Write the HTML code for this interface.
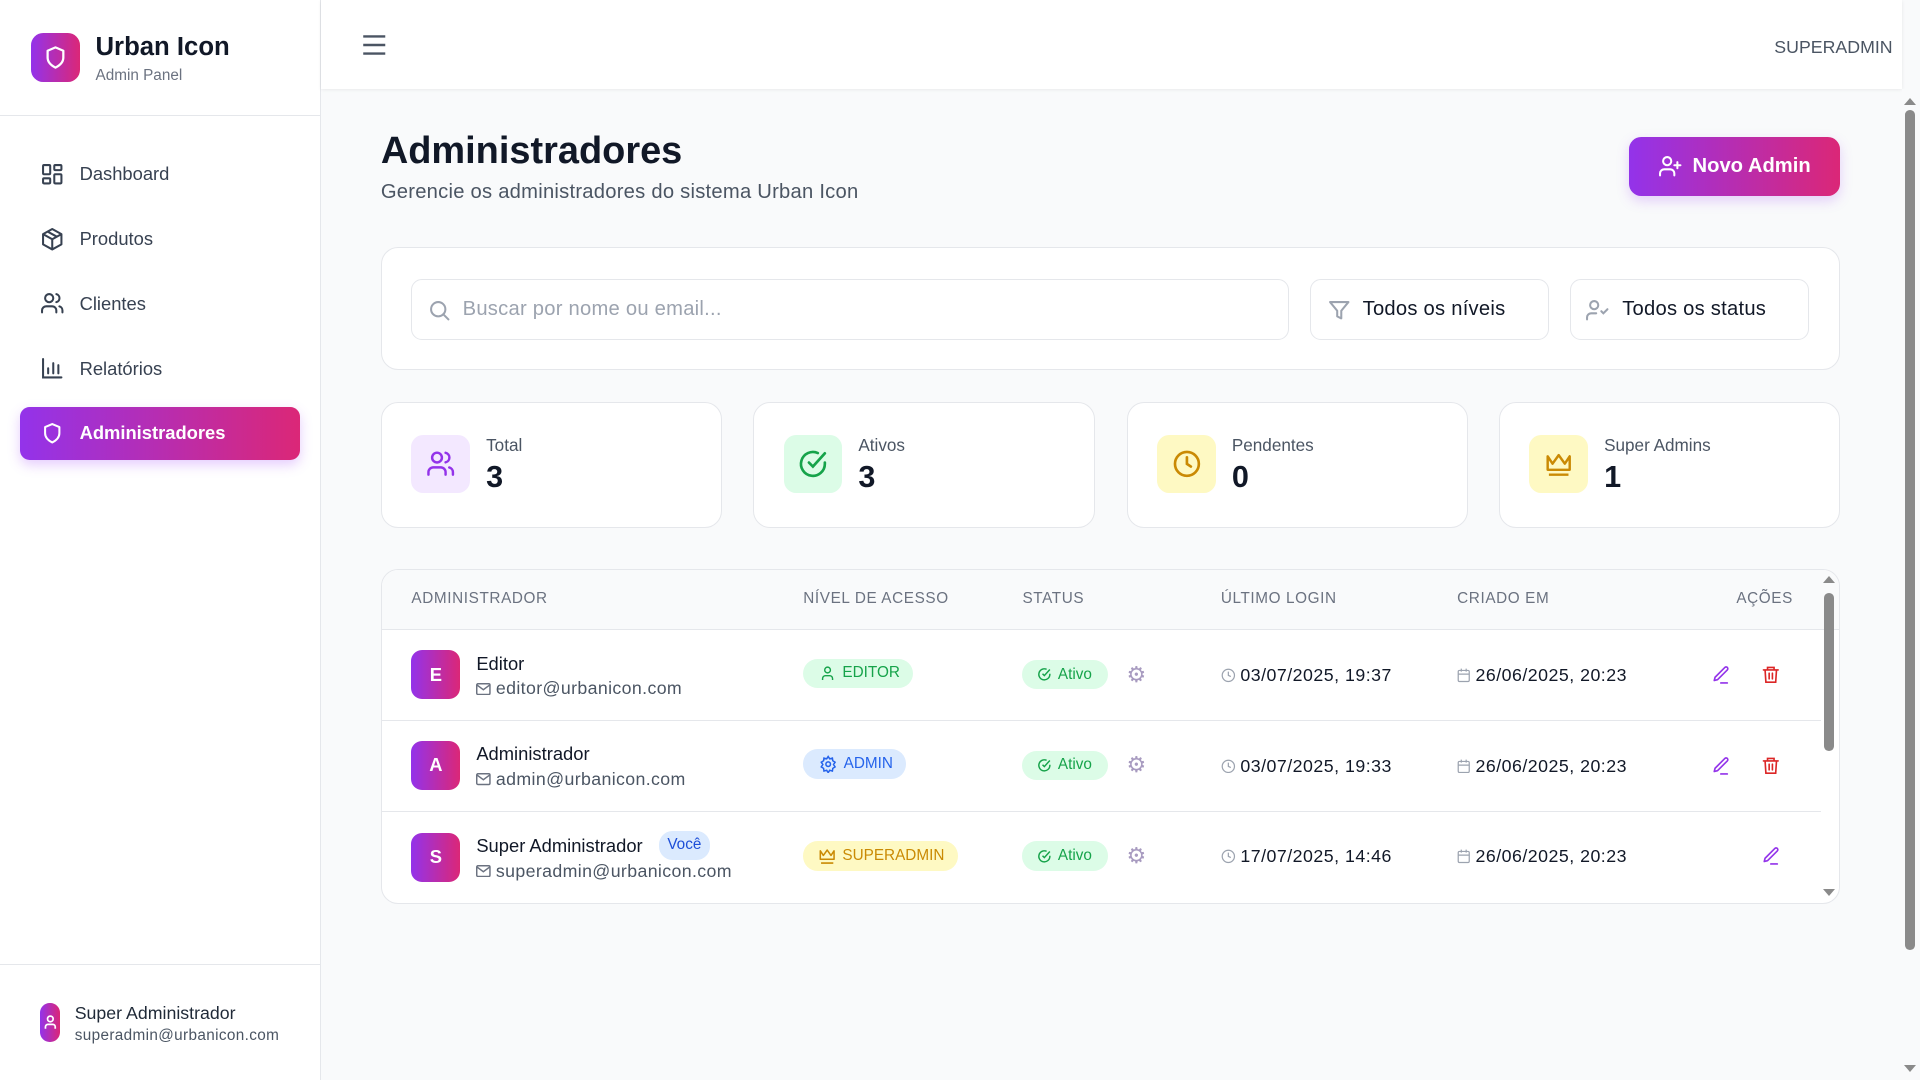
<!DOCTYPE html>
<html><head><meta charset="utf-8"><style>
html{zoom:1.22449}
*{box-sizing:border-box;margin:0;padding:0}
body{width:1568px;height:882px;overflow:hidden;background:#f9fafb;font-family:"Liberation Sans",sans-serif;color:#111827;position:relative}
.a{position:absolute}
svg{display:block}
.sb{left:0;top:0;width:262px;height:882px;background:#fff;border-right:1px solid #e5e7eb}
.nav{left:16px;width:229px;height:44px;border-radius:8px;display:flex;align-items:center;padding-left:17px;font-size:15px;color:#374151}
.nav svg{margin-right:12px}
.card{background:#fff;border:1px solid #e5e7eb;border-radius:14px}
.inp{border:1px solid #e5e7eb;border-radius:9px;height:50px;display:flex;align-items:center;font-size:16.5px;letter-spacing:.2px}
.ic{width:48px;height:48px;border-radius:10px;display:flex;align-items:center;justify-content:center}
.lbl{font-size:14px;color:#4b5563}
.num{font-size:25px;font-weight:bold;color:#111827}
.th{font-size:12.5px;color:#6b7280;letter-spacing:.5px;top:482px}
.av{width:40px;height:40px;border-radius:9px;background:linear-gradient(90deg,#9333ea,#db2777);color:#fff;font-weight:bold;font-size:15px;display:flex;align-items:center;justify-content:center}
.nm{font-size:15px;color:#111827}
.em{font-size:14.5px;color:#4b5563;display:flex;align-items:center;gap:4px;letter-spacing:.3px}
.bd{height:24px;border-radius:12px;display:flex;align-items:center;padding:0 11px 0 13px;font-size:12.5px;gap:5px}
.ok{background:#dcfce7;color:#16a34a;width:70px;padding-left:12px}
.dt{font-size:14.5px;display:flex;align-items:center;gap:4px;color:#111827;letter-spacing:.4px}
.row{left:311px;width:1176px;height:1px;background:#e5e7eb}
</style></head><body>
<div class="a sb">
 <div class="a" style="left:25px;top:27px;width:40px;height:40px;border-radius:10px;background:linear-gradient(90deg,#9333ea,#db2777);display:flex;align-items:center;justify-content:center">
  <svg width="22" height="22" viewBox="0 0 24 24" fill="none" stroke="#fff" stroke-width="2" stroke-linejoin="round"><path d="M12 3l7 3v6c0 4-3 7-7 9-4-2-7-5-7-9V6z"/></svg></div>
 <div class="a" style="left:78px;top:27px;font-size:21px;font-weight:bold">Urban Icon</div>
 <div class="a" style="left:78px;top:55px;font-size:12.5px;color:#6b7280">Admin Panel</div>
 <div class="a" style="left:0;top:94px;width:261px;height:1px;background:#e5e7eb"></div>
 <div class="a nav" style="top:120px"><svg width="20" height="20" viewBox="0 0 24 24" fill="none" stroke="#374151" stroke-width="2"><rect x="3" y="3" width="7" height="9" rx="1"/><rect x="14" y="3" width="7" height="5" rx="1"/><rect x="14" y="12" width="7" height="9" rx="1"/><rect x="3" y="16" width="7" height="5" rx="1"/></svg>Dashboard</div>
 <div class="a nav" style="top:173px"><svg width="20" height="20" viewBox="0 0 24 24" fill="none" stroke="#374151" stroke-width="2" stroke-linejoin="round"><path d="M12 2l9 5v10l-9 5-9-5V7z M3 7l9 5 9-5 M12 12v10 M7.5 4.5l9 5"/></svg>Produtos</div>
 <div class="a nav" style="top:226px"><svg width="20" height="20" viewBox="0 0 24 24" fill="none" stroke="#374151" stroke-width="2" stroke-linecap="round"><circle cx="9" cy="7" r="4"/><path d="M2 21v-2a4 4 0 014-4h6a4 4 0 014 4v2M16 3.1a4 4 0 010 7.8M22 21v-2a4 4 0 00-3-3.9"/></svg>Clientes</div>
 <div class="a nav" style="top:279px"><svg width="20" height="20" viewBox="0 0 24 24" fill="none" stroke="#374151" stroke-width="2" stroke-linecap="round"><path d="M3 3v18h18M8 17v-5M13 17V7M18 17v-8"/></svg>Relatórios</div>
 <div class="a nav" style="top:332px;background:linear-gradient(90deg,#9333ea,#db2777);color:#fff;font-weight:bold;box-shadow:0 4px 10px rgba(168,85,247,.3)"><svg width="20" height="20" viewBox="0 0 24 24" fill="none" stroke="#fff" stroke-width="2" stroke-linejoin="round"><path d="M12 3l7 3v6c0 4-3 7-7 9-4-2-7-5-7-9V6z"/></svg>Administradores</div>
 <div class="a" style="left:0;top:787px;width:261px;height:1px;background:#e5e7eb"></div>
 <div class="a" style="left:33px;top:819px;width:16px;height:32px;border-radius:8px;background:linear-gradient(90deg,#9333ea,#db2777);display:flex;align-items:center;justify-content:center"><svg width="12" height="14" viewBox="0 0 12 14" fill="none" stroke="#fff" stroke-width="1.4"><circle cx="6" cy="4" r="2.3"/><path d="M2 12v-1.5a2 2 0 012-2h4a2 2 0 012 2V12"/></svg></div>
 <div class="a" style="left:61px;top:819px;font-size:14.5px;color:#1f2937">Super Administrador</div>
 <div class="a" style="left:61px;top:839px;font-size:12.5px;color:#4b5563;letter-spacing:.3px">superadmin@urbanicon.com</div>
</div>
<div class="a" style="left:262px;top:0;width:1291px;height:73px;background:#fff;box-shadow:0 1px 3px rgba(0,0,0,.08)">
 <svg class="a" style="left:34px;top:28px" width="20" height="18" viewBox="0 0 20 18" stroke="#4b5563" stroke-width="2"><path d="M1 2h18M1 9h18M1 16h18"/></svg>
 <div class="a" style="left:1187px;top:30px;font-size:14.5px;color:#4b5563">SUPERADMIN</div>
</div>
<div class="a" style="left:1553px;top:73px;width:15px;height:809px;background:#f9fafb"></div>
<div class="a" style="left:1556px;top:90px;width:8px;height:686px;border-radius:4px;background:#8a8a8a"></div>
<div class="a" style="left:1555px;top:80px;width:0;height:0;border-left:5px solid transparent;border-right:5px solid transparent;border-bottom:6px solid #8a8a8a"></div>
<div class="a" style="left:1555px;top:870px;width:0;height:0;border-left:5px solid transparent;border-right:5px solid transparent;border-top:6px solid #8a8a8a"></div>
<div class="a" style="left:311px;top:106px;font-size:31px;font-weight:bold">Administradores</div>
<div class="a" style="left:311px;top:148px;font-size:16.5px;color:#4b5563;letter-spacing:.2px">Gerencie os administradores do sistema Urban Icon</div>
<div class="a" style="left:1330px;top:112px;width:173px;height:48px;border-radius:10px;background:linear-gradient(90deg,#9333ea,#db2777);color:#fff;font-size:16.5px;font-weight:bold;display:flex;align-items:center;justify-content:center;gap:8px;box-shadow:0 4px 10px rgba(168,85,247,.25)"><svg width="20" height="20" viewBox="0 0 24 24" fill="none" stroke="#fff" stroke-width="2" stroke-linecap="round"><circle cx="9" cy="7" r="4"/><path d="M2 21v-2a4 4 0 014-4h6a4 4 0 014 4v2M19 8v6M16 11h6"/></svg>Novo Admin</div>
<div class="a card" style="left:311px;top:202px;width:1192px;height:100px"></div>
<div class="a inp" style="left:336px;top:228px;width:717px;padding-left:12px;color:#9ca3af"><svg width="20" height="20" viewBox="0 0 24 24" fill="none" stroke="#9ca3af" stroke-width="2" stroke-linecap="round"><circle cx="11" cy="11" r="7"/><path d="M21 21l-5-5"/></svg><span style="margin-left:9px">Buscar por nome ou email...</span></div>
<div class="a inp" style="left:1070px;top:228px;width:195px;padding-left:13px"><svg width="20" height="20" viewBox="0 0 24 24" fill="none" stroke="#9ca3af" stroke-width="2" stroke-linejoin="round"><path d="M3 4h18l-7 8.5V20l-4-2v-5.5z"/></svg><span style="margin-left:9px">Todos os níveis</span></div>
<div class="a inp" style="left:1282px;top:228px;width:195px;padding-left:12px"><svg width="20" height="20" viewBox="0 0 24 24" fill="none" stroke="#9ca3af" stroke-width="2" stroke-linecap="round"><circle cx="9" cy="7" r="4"/><path d="M2 21v-2a4 4 0 014-4h5M16 13l2 2 4-4"/></svg><span style="margin-left:10px">Todos os status</span></div>
<div class="a card" style="left:311px;top:328px;width:279px;height:103px"></div>
<div class="a card" style="left:615px;top:328px;width:279px;height:103px"></div>
<div class="a card" style="left:920px;top:328px;width:279px;height:103px"></div>
<div class="a card" style="left:1224px;top:328px;width:279px;height:103px"></div>
<div class="a ic" style="left:336px;top:355px;background:#f3e8ff"><svg width="24" height="24" viewBox="0 0 24 24" fill="none" stroke="#9333ea" stroke-width="2" stroke-linecap="round"><circle cx="9" cy="7" r="4"/><path d="M2 21v-2a4 4 0 014-4h6a4 4 0 014 4v2M16 3.1a4 4 0 010 7.8M22 21v-2a4 4 0 00-3-3.9"/></svg></div>
<div class="a ic" style="left:640px;top:355px;background:#dcfce7"><svg width="26" height="26" viewBox="0 0 24 24" fill="none" stroke="#16a34a" stroke-width="2" stroke-linecap="round"><path d="M21 11v1a9 9 0 11-5.3-8.2"/><path d="M9 11l3 3 9-10"/></svg></div>
<div class="a ic" style="left:945px;top:355px;background:#fef9c3"><svg width="26" height="26" viewBox="0 0 24 24" fill="none" stroke="#ca8a04" stroke-width="2" stroke-linecap="round"><circle cx="12" cy="12" r="9"/><path d="M12 7v5l3 2"/></svg></div>
<div class="a ic" style="left:1249px;top:355px;background:#fef9c3"><svg width="24" height="24" viewBox="0 0 24 24" fill="none" stroke="#ca8a04" stroke-width="2" stroke-linejoin="round"><path d="M3 6l4 6 5-7 5 7 4-6v11H3z" fill="none"/><path d="M4 21h16"/></svg></div>
<div class="a lbl" style="left:397px;top:355px">Total</div><div class="a num" style="left:397px;top:376px">3</div>
<div class="a lbl" style="left:701px;top:355px">Ativos</div><div class="a num" style="left:701px;top:376px">3</div>
<div class="a lbl" style="left:1006px;top:355px">Pendentes</div><div class="a num" style="left:1006px;top:376px">0</div>
<div class="a lbl" style="left:1310px;top:355px">Super Admins</div><div class="a num" style="left:1310px;top:376px">1</div>
<div class="a card" style="left:311px;top:465px;width:1192px;height:273px;overflow:hidden"><div style="height:49px;background:#f9fafb;border-bottom:1px solid #e5e7eb"></div></div>
<div class="a" style="left:1490px;top:484px;width:8px;height:129px;border-radius:4px;background:#8a8a8a"></div>
<div class="a" style="left:1489px;top:470px;border-left:5px solid transparent;border-right:5px solid transparent;border-bottom:6px solid #8a8a8a"></div>
<div class="a" style="left:1489px;top:726px;border-left:5px solid transparent;border-right:5px solid transparent;border-top:6px solid #8a8a8a"></div>
<div class="a th" style="left:336px">ADMINISTRADOR</div>
<div class="a th" style="left:656px">NÍVEL DE ACESSO</div>
<div class="a th" style="left:835px">STATUS</div>
<div class="a th" style="left:997px">ÚLTIMO LOGIN</div>
<div class="a th" style="left:1190px">CRIADO EM</div>
<div class="a th" style="left:1418px">AÇÕES</div>
<div class="a row" style="top:588px"></div>
<div class="a row" style="top:662px"></div>

<div class="a av" style="left:336px;top:531px">E</div>
<div class="a nm" style="left:389px;top:533px">Editor</div>
<div class="a em" style="left:389px;top:554px"><svg width="12" height="10" viewBox="0 0 12 10" fill="none" stroke="#6b7280" stroke-width="1.2"><rect x=".6" y=".6" width="10.8" height="8.8" rx="1"/><path d="M.6 1.5l5.4 4 5.4-4"/></svg>editor@urbanicon.com</div>
<div class="a bd" style="left:656px;top:538px;background:#dcfce7;color:#16a34a"><svg width="14" height="14" viewBox="0 0 24 24" fill="none" stroke="#16a34a" stroke-width="2"><circle cx="12" cy="7" r="4"/><path d="M5 21v-2a4 4 0 014-4h6a4 4 0 014 4v2"/></svg>EDITOR</div>

<div class="a av" style="left:336px;top:605px">A</div>
<div class="a nm" style="left:389px;top:607px">Administrador</div>
<div class="a em" style="left:389px;top:628px"><svg width="12" height="10" viewBox="0 0 12 10" fill="none" stroke="#6b7280" stroke-width="1.2"><rect x=".6" y=".6" width="10.8" height="8.8" rx="1"/><path d="M.6 1.5l5.4 4 5.4-4"/></svg>admin@urbanicon.com</div>
<div class="a bd" style="left:656px;top:612px;background:#dbeafe;color:#2563eb"><svg width="15" height="15" viewBox="0 0 24 24" fill="none" stroke="#2563eb" stroke-width="2"><circle cx="12" cy="12" r="3"/><path d="M12 2l2 3 3.5-1 .5 3.5 3 2-2 3 2 3-3 2-.5 3.5-3.5-1-2 3-2-3-3.5 1-.5-3.5-3-2 2-3-2-3 3-2L6.5 4 10 5z"/></svg>ADMIN</div>

<div class="a av" style="left:336px;top:680px">S</div>
<div class="a nm" style="left:389px;top:682px">Super Administrador</div>
<div class="a" style="left:538px;top:679px;height:23px;padding:0 7px;border-radius:11px;background:#dbeafe;color:#1d4ed8;font-size:12.5px;line-height:23px">Você</div>
<div class="a em" style="left:389px;top:703px"><svg width="12" height="10" viewBox="0 0 12 10" fill="none" stroke="#6b7280" stroke-width="1.2"><rect x=".6" y=".6" width="10.8" height="8.8" rx="1"/><path d="M.6 1.5l5.4 4 5.4-4"/></svg>superadmin@urbanicon.com</div>
<div class="a bd" style="left:656px;top:687px;background:#fef9c3;color:#ca8a04;padding-left:12px"><svg width="15" height="15" viewBox="0 0 24 24" fill="none" stroke="#ca8a04" stroke-width="2" stroke-linejoin="round"><path d="M3 5l4 6 5-7 5 7 4-6v11H3zM4 21h16"/></svg>SUPERADMIN</div>

<div class="a bd ok" style="top:539px;left:835px"><svg width="12" height="12" viewBox="0 0 24 24" fill="none" stroke="#16a34a" stroke-width="2.4"><path d="M21 11v1a9 9 0 11-5.3-8.2M9 11l3 3 9-10"/></svg>Ativo</div>
<div class="a bd ok" style="top:613px;left:835px"><svg width="12" height="12" viewBox="0 0 24 24" fill="none" stroke="#16a34a" stroke-width="2.4"><path d="M21 11v1a9 9 0 11-5.3-8.2M9 11l3 3 9-10"/></svg>Ativo</div>
<div class="a bd ok" style="top:687px;left:835px"><svg width="12" height="12" viewBox="0 0 24 24" fill="none" stroke="#16a34a" stroke-width="2.4"><path d="M21 11v1a9 9 0 11-5.3-8.2M9 11l3 3 9-10"/></svg>Ativo</div>
<div class="a" style="left:920px;top:542px;font-size:18px;color:#a89bc0;line-height:18px">⚙</div>
<div class="a" style="left:920px;top:616px;font-size:18px;color:#a89bc0;line-height:18px">⚙</div>
<div class="a" style="left:920px;top:690px;font-size:18px;color:#a89bc0;line-height:18px">⚙</div>

<div class="a dt" style="left:997px;top:543px"><svg width="12" height="12" viewBox="0 0 24 24" fill="none" stroke="#9ca3af" stroke-width="2"><circle cx="12" cy="12" r="10"/><path d="M12 6v6l4 2"/></svg>03/07/2025, 19:37</div>
<div class="a dt" style="left:997px;top:617px"><svg width="12" height="12" viewBox="0 0 24 24" fill="none" stroke="#9ca3af" stroke-width="2"><circle cx="12" cy="12" r="10"/><path d="M12 6v6l4 2"/></svg>03/07/2025, 19:33</div>
<div class="a dt" style="left:997px;top:691px"><svg width="12" height="12" viewBox="0 0 24 24" fill="none" stroke="#9ca3af" stroke-width="2"><circle cx="12" cy="12" r="10"/><path d="M12 6v6l4 2"/></svg>17/07/2025, 14:46</div>
<div class="a dt" style="left:1190px;top:543px"><svg width="11" height="12" viewBox="0 0 22 24" fill="none" stroke="#9ca3af" stroke-width="2"><rect x="2" y="4" width="18" height="18" rx="2"/><path d="M7 1v5M15 1v5M2 10h18"/></svg>26/06/2025, 20:23</div>
<div class="a dt" style="left:1190px;top:617px"><svg width="11" height="12" viewBox="0 0 22 24" fill="none" stroke="#9ca3af" stroke-width="2"><rect x="2" y="4" width="18" height="18" rx="2"/><path d="M7 1v5M15 1v5M2 10h18"/></svg>26/06/2025, 20:23</div>
<div class="a dt" style="left:1190px;top:691px"><svg width="11" height="12" viewBox="0 0 22 24" fill="none" stroke="#9ca3af" stroke-width="2"><rect x="2" y="4" width="18" height="18" rx="2"/><path d="M7 1v5M15 1v5M2 10h18"/></svg>26/06/2025, 20:23</div>

<svg class="a" style="left:1397px;top:543px" width="16" height="16" viewBox="0 0 24 24" fill="none" stroke="#9333ea" stroke-width="2" stroke-linecap="round" stroke-linejoin="round"><path d="M12 22h8M17 3a2.1 2.1 0 013 3L8 18l-4 1 1-4z"/></svg>
<svg class="a" style="left:1397px;top:617px" width="16" height="16" viewBox="0 0 24 24" fill="none" stroke="#9333ea" stroke-width="2" stroke-linecap="round" stroke-linejoin="round"><path d="M12 22h8M17 3a2.1 2.1 0 013 3L8 18l-4 1 1-4z"/></svg>
<svg class="a" style="left:1438px;top:691px" width="16" height="16" viewBox="0 0 24 24" fill="none" stroke="#9333ea" stroke-width="2" stroke-linecap="round" stroke-linejoin="round"><path d="M12 22h8M17 3a2.1 2.1 0 013 3L8 18l-4 1 1-4z"/></svg>
<svg class="a" style="left:1438px;top:543px" width="16" height="16" viewBox="0 0 24 24" fill="none" stroke="#dc2626" stroke-width="2" stroke-linecap="round"><path d="M3 6h18M8 6V3h8v3M5 6l1 15h12l1-15M10 10v7M14 10v7"/></svg>
<svg class="a" style="left:1438px;top:617px" width="16" height="16" viewBox="0 0 24 24" fill="none" stroke="#dc2626" stroke-width="2" stroke-linecap="round"><path d="M3 6h18M8 6V3h8v3M5 6l1 15h12l1-15M10 10v7M14 10v7"/></svg>
</body></html>
